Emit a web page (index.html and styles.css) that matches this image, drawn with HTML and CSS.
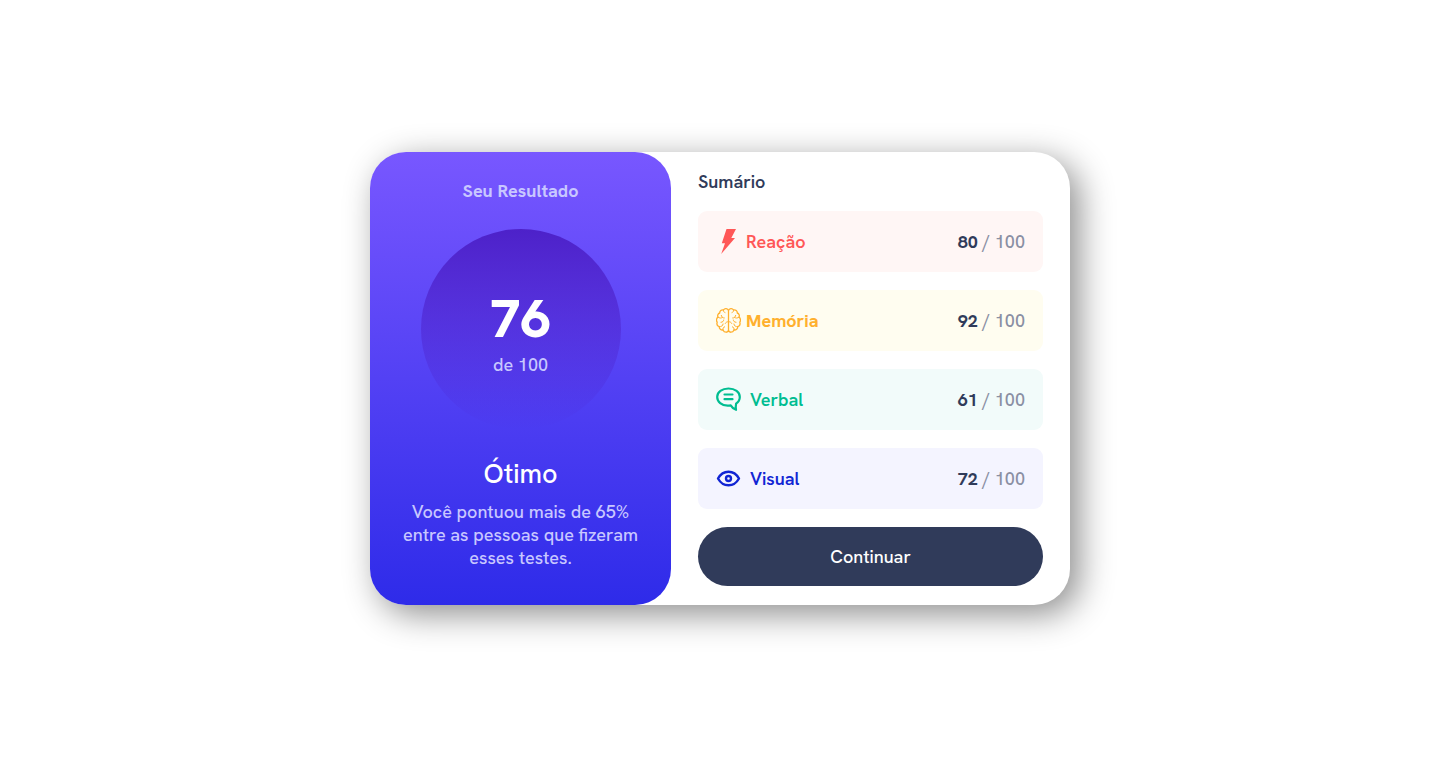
FILE: index.html
```html
<!DOCTYPE html>
<html lang="pt-BR">
<head>
  <meta charset="utf-8">
  <meta name="viewport" content="width=device-width, initial-scale=1">
  <title>Resultado</title>
  <link rel="stylesheet" href="styles.css">
</head>
<body>
  <main class="card">
    <section class="result">
      <h1 class="result-title">Seu Resultado</h1>
      <div class="score">
        <strong class="score-value">76</strong>
        <span class="score-total">de 100</span>
      </div>
      <h2 class="grade">Ótimo</h2>
      <p class="message">Você pontuou mais de 65% entre as pessoas que fizeram esses testes.</p>
    </section>
    <section class="summary">
      <h2 class="summary-title">Sumário</h2>
      <ul class="list">
        <li class="item item-reaction">
          <svg class="icon" viewBox="0 0 25 25" aria-hidden="true"><path fill="currentColor" d="M10.500 0H20l-4.700 9H19L5.200 25l3.800-10.800H5.800z"/></svg>
          <span class="name">Reação</span>
          <span class="points"><b>80</b> / 100</span>
        </li>
        <li class="item item-memory">
          <svg class="icon" viewBox="0 0 25 25" fill="none" stroke="currentColor" stroke-linecap="round" stroke-linejoin="round" aria-hidden="true">
            <path stroke-width="1.300" d="M12.500 2.600C11.800.3 8.600.1 7.500 2 5.400 1.500 3.600 3 3.700 5 1.900 5.500 1.200 7.500 2 9.100.300 10.200.1 12.800 1.200 14.200.5 16.300 1.500 18.100 3.200 18.700 3.200 20.900 5 22.300 7 21.900 8.300 24.900 12 25 12.500 22.200zM12.500 2.600C13.200.3 16.400.1 17.500 2 19.600 1.500 21.400 3 21.300 5 23.100 5.500 23.800 7.500 23 9.100 24.700 10.200 24.900 12.800 23.800 14.200 24.500 16.300 23.500 18.100 21.800 18.700 21.800 20.900 20 22.300 18 21.900 16.700 24.900 13 25 12.500 22.200z"/>
            <path stroke-width="1" d="M7.500 2c-.3 1.300.3 2.200 1.500 2.600M2 9.100c1.400 1.300 3.300 1.300 4.500.2M5.300 7.400c.2 1.700 1.300 2.700 3 2.600M5 14.300c1.700-.1 2.600-1 2.700-2.300M12.500 13.700c-1.500-.1-2.700.5-3.200 1.700M3.200 18.700c2.200.2 3.600-.8 3.900-2.700M7 21.900c-.4-1.400.2-2.700 1.600-3.100M17.500 2c.3 1.300-.3 2.200-1.500 2.600M23 9.100c-1.400 1.300-3.300 1.300-4.500.2M19.700 7.400c-.2 1.700-1.300 2.700-3 2.600M20 14.300c-1.700-.1-2.600-1-2.700-2.300M12.500 13.700c1.500-.1 2.700.5 3.200 1.700M21.800 18.700c-2.200.2-3.600-.8-3.900-2.700M18 21.900c.4-1.400-.2-2.700-1.600-3.100"/>
          </svg>
          <span class="name">Memória</span>
          <span class="points"><b>92</b> / 100</span>
        </li>
        <li class="item item-verbal">
          <svg class="icon" viewBox="0 0 25 25" fill="none" stroke="currentColor" stroke-width="2.200" stroke-linecap="round" stroke-linejoin="round" aria-hidden="true">
            <path d="M12.500 1.500C6 1.500 1.200 5.200 1.200 10s4.400 8.600 10.500 8.700c1 0 2.100-.1 3-.3 1.200 2 2.900 3.600 5.300 4.400-.4-2-.3-4 .1-6.200 2.300-1.600 3.700-3.900 3.700-6.600C23.800 5.200 19 1.500 12.500 1.500z"/>
            <path d="M8.500 7.500h8M8.500 12.200h8"/>
          </svg>
          <span class="name">Verbal</span>
          <span class="points"><b>61</b> / 100</span>
        </li>
        <li class="item item-visual">
          <svg class="icon" viewBox="0 0 25 25" fill="none" stroke="currentColor" stroke-width="2.400" stroke-linejoin="round" aria-hidden="true">
            <path d="M2 12.500C4.500 8 8.200 5.700 12.500 5.700S20.500 8 23 12.500c-2.500 4.500-6.200 6.800-10.500 6.800S4.500 17 2 12.500z"/>
            <circle cx="12.500" cy="12.500" r="2.500"/>
          </svg>
          <span class="name">Visual</span>
          <span class="points"><b>72</b> / 100</span>
        </li>
      </ul>
      <button class="continue" type="button">Continuar</button>
    </section>
  </main>
</body>
</html>
```
FILE: styles.css
```css
* {
  box-sizing: border-box;
  margin: 0;
  padding: 0;
}

body {
  min-height: 100vh;
  display: flex;
  align-items: center;
  justify-content: center;
  background: #fff;
  color: #303b5a;
  font-family: "HK Grotesk", "Hanken Grotesk", Roboto, sans-serif;
  font-size: 18px;
  font-weight: 500;
  line-height: 23px;
}

.card {
  display: grid;
  grid-template-columns: 43fr 57fr;
  width: 100%;
  max-width: 700px;
  border-radius: 36px;
  background: #fff;
  box-shadow: 9px 9px 34px rgba(0, 0, 0, 0.45);
}

.result {
  display: flex;
  flex-direction: column;
  align-items: center;
  padding: 27px 27px 36px;
  border-radius: 36px;
  background: linear-gradient(#7857ff, #2e2be9);
  color: #c8c7ff;
  text-align: center;
}

.result-title {
  font-size: 18px;
  font-weight: 700;
}

.score {
  display: flex;
  flex-direction: column;
  align-items: center;
  justify-content: center;
  gap: 3px;
  width: 200px;
  aspect-ratio: 1;
  margin: 27px 0;
  padding-top: 3px;
  border-radius: 50%;
  background: linear-gradient(#4d21c9, rgba(77, 33, 201, 0));
}

.score-value {
  color: #fff;
  font-size: 54px;
  font-weight: 800;
  line-height: 64px;
}

.grade {
  margin-bottom: 9px;
  color: #fff;
  font-size: 27px;
  font-weight: 500;
  line-height: 35px;
}

.summary {
  display: flex;
  flex-direction: column;
  gap: 18px;
  padding: 18px 27px;
}

.summary-title {
  font-size: 18px;
  font-weight: 600;
}

.list {
  display: grid;
  gap: 18px;
  list-style: none;
}

.item {
  display: flex;
  align-items: center;
  gap: 5px;
  padding: 18px;
  border-radius: 9px;
}

.item-verbal,
.item-visual {
  gap: 9px;
}

.icon {
  width: 25px;
  height: 25px;
}

.name {
  font-weight: 600;
}

.item-memory .name {
  font-weight: 700;
}

.points {
  margin-left: auto;
  color: #8a8fa3;
}

.points b {
  color: #303b5a;
  font-weight: 700;
}

.item-reaction {
  background: #fff6f5;
  color: #ff5757;
}

.item-memory {
  background: #fffdf0;
  color: #ffb02e;
}

.item-verbal {
  background: #f2fbfa;
  color: #00bd91;
}

.item-visual {
  background: #f4f4ff;
  color: #1125d4;
}

.continue {
  padding: 18px;
  border: 0;
  border-radius: 30px;
  background: #303b5a;
  color: #fff;
  font: inherit;
  cursor: pointer;
}
```
